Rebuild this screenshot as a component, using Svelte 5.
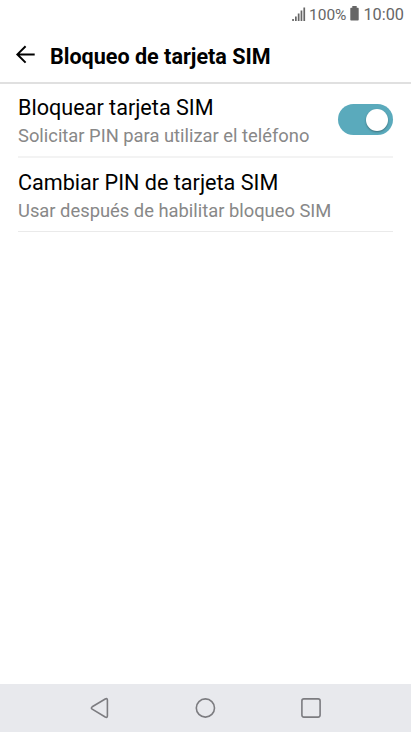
<script lang="ts">
	let locked = $state(true);

	const bars = [2, 4.5, 7.5, 10.5, 13.5];
</script>

<div class="screen">
	<div class="status">
		<svg class="signal" width="14" height="14" viewBox="0 0 14 14">
			{#each bars as h, i}
				<rect x={0.2 + i * 2.8} y={14 - h} width="1.7" height={h} />
			{/each}
		</svg>
		<span class="percent">100%</span>
		<svg class="battery" width="9" height="15" viewBox="0 0 9 15">
			<path d="M2.3 0h4.4v1.7H8a.7.7 0 0 1 .7.7V13.8a.7.7 0 0 1-.7.7H1a.7.7 0 0 1-.7-.7V2.4a.7.7 0 0 1 .7-.7h1.3z" />
		</svg>
		<span class="clock">10:00</span>
	</div>

	<header>
		<button class="back" aria-label="Atrás">
			<svg width="20" height="20" viewBox="0 0 20 20">
				<path d="M10.6 1.2 2.4 9.4l8.2 8.2M2.4 9.4h17.3" />
			</svg>
		</button>
		<h1>Bloqueo de tarjeta SIM</h1>
	</header>

	<main>
		<div class="row">
			<div class="text">
				<div class="title">Bloquear tarjeta SIM</div>
				<div class="summary">Solicitar PIN para utilizar el teléfono</div>
			</div>
			<button
				class="switch"
				class:on={locked}
				role="switch"
				aria-checked={locked}
				aria-label="Bloquear tarjeta SIM"
				onclick={() => (locked = !locked)}
			>
				<span class="knob"></span>
			</button>
		</div>
		<div class="row">
			<div class="text">
				<div class="title">Cambiar PIN de tarjeta SIM</div>
				<div class="summary">Usar después de habilitar bloqueo SIM</div>
			</div>
		</div>
	</main>

	<nav>
		<svg width="22" height="22" viewBox="0 0 22 22">
			<path d="M4.2 9.8 17.2 2Q19.4 1 19.4 3v16q0 2-2.2 1L4.2 12.2Q2.6 11 4.2 9.8z" />
		</svg>
		<svg width="22" height="22" viewBox="0 0 22 22">
			<circle cx="11.4" cy="11" r="9.1" />
		</svg>
		<svg width="22" height="22" viewBox="0 0 22 22">
			<rect x="1.9" y="1.9" width="18.2" height="18.2" rx="2" />
		</svg>
	</nav>
</div>

<style>
	.screen {
		width: 411px;
		height: 732px;
		display: flex;
		flex-direction: column;
		background: #fff;
		color: #000;
		font-family: Roboto, sans-serif;
		overflow: hidden;
	}

	button {
		border: 0;
		padding: 0;
		background: none;
		cursor: pointer;
	}

	.status {
		height: 30px;
		box-sizing: border-box;
		padding-right: 7px;
		display: flex;
		align-items: center;
		justify-content: flex-end;
		color: #666;
		fill: #666;
		line-height: 28px;
	}

	.signal {
		margin-bottom: 2px;
	}

	.percent {
		margin: 0 4px 0 3px;
		font-size: 15.5px;
	}

	.battery {
		margin: 0 4px 3px 0;
	}

	.clock {
		font-size: 16.3px;
	}

	header {
		height: 54px;
		box-sizing: border-box;
		padding-left: 15px;
		border-bottom: 2px solid #e0e0e0;
		display: flex;
		align-items: center;
	}

	.back {
		display: flex;
		margin-right: 15px;
		margin-bottom: 2px;
	}

	.back path {
		fill: none;
		stroke: #000;
		stroke-width: 2;
	}

	h1 {
		margin: 0;
		padding-top: 2px;
		font-size: 21.55px;
		font-weight: 700;
		line-height: 26px;
	}

	main {
		flex: 1;
		padding: 0 18px;
	}

	.row {
		height: 74px;
		box-sizing: border-box;
		border-bottom: 2px solid #f3f3f3;
		display: flex;
		justify-content: space-between;
	}

	.row:last-child {
		border-bottom: 1px solid #eaeaea;
	}

	.text {
		padding-top: 10px;
		white-space: nowrap;
	}

	.row:last-child .text {
		padding-top: 11px;
	}

	.title {
		font-size: 21.6px;
		line-height: 28px;
	}

	.summary {
		font-size: 18.35px;
		line-height: 27px;
		color: #888;
	}

	.switch {
		width: 55px;
		height: 31px;
		margin-top: 20px;
		padding: 0 5px;
		border-radius: 16px;
		background: #bbb;
		display: flex;
		align-items: center;
		flex-shrink: 0;
	}

	.switch.on {
		background: #5aaabc;
		justify-content: flex-end;
	}

	.knob {
		width: 22px;
		height: 22px;
		border-radius: 50%;
		background: #fff;
		box-shadow: 0 1px 2px rgba(0, 0, 0, 0.35);
	}

	nav {
		height: 48px;
		box-sizing: border-box;
		padding-right: 1px;
		background: #e8e9ed;
		display: flex;
		align-items: center;
		justify-content: center;
		gap: 84px;
	}

	nav svg {
		fill: none;
		stroke: #7c7c80;
		stroke-width: 1.6;
	}
</style>
